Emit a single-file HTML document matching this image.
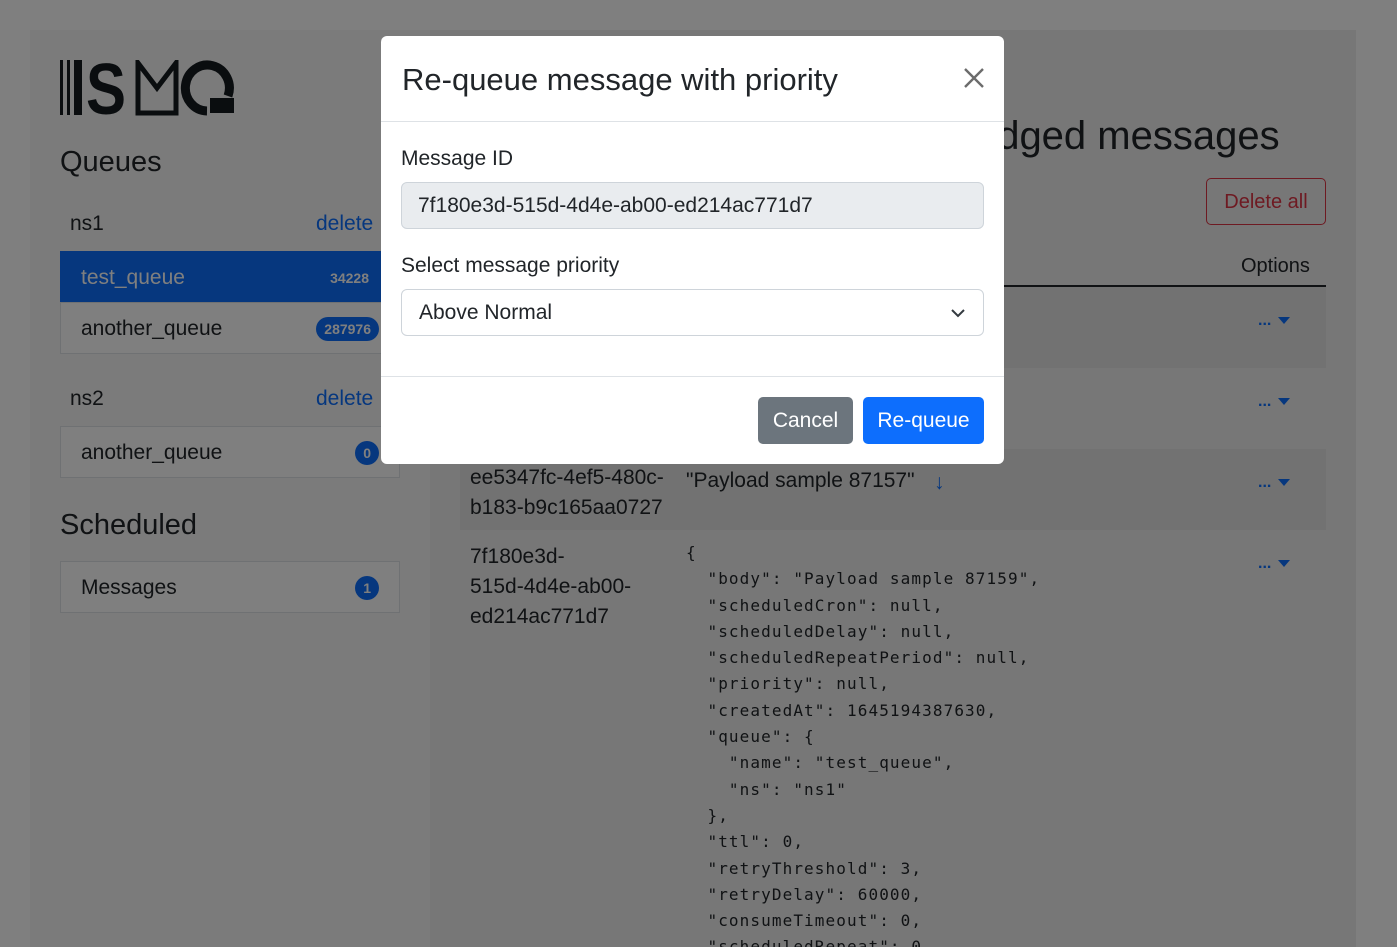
<!DOCTYPE html>
<html><head><meta charset="utf-8"><style>
*{box-sizing:border-box;margin:0;padding:0}
html{overflow:hidden;width:1397px;height:947px}
body{width:1397px;height:947px;overflow:hidden;background:#fff;font-family:"Liberation Sans","DejaVu Sans",sans-serif;color:#212529;position:relative}
.a{position:absolute;white-space:nowrap}
.side{position:absolute;left:30px;top:30px;width:400px;height:917px;background:#f6f6f6}
.main{position:absolute;left:430px;top:30px;width:926px;height:917px;background:#eeeeee}
.item{position:absolute;left:60px;width:340px;height:52px;border:1px solid #dee2e6;background:#fff;font-size:21px}
.item span.t{position:absolute;left:20px;top:14px}
.badge{position:absolute;right:20px;top:14px;background:#0d6efd;color:#fff;font-size:14px;font-weight:bold;border-radius:12px;padding:4px 8px}
.blue{color:#0d6efd}
.row{position:absolute;left:460px;width:866px;height:81px}
.dots{position:absolute;left:1258px;color:#0d6efd;font-size:16px;font-weight:bold}
.tri{position:absolute;left:1278px;width:0;height:0;border-left:6px solid transparent;border-right:6px solid transparent;border-top:7px solid #0d6efd}
.clip{position:absolute;left:686px;top:540px;width:500px;height:407px;overflow:hidden}
pre{font-family:"DejaVu Sans Mono","Liberation Mono",monospace;font-size:16px;letter-spacing:1.1px;line-height:26.3px;color:#212529;white-space:pre}
.overlay{position:absolute;left:0;top:0;width:1397px;height:947px;background:rgba(0,0,0,.5)}
.modal{position:absolute;left:381px;top:36px;width:623px;height:428px;background:#fff;border-radius:6px}
</style></head><body>
<div class="side"></div>
<div class="main"></div>
<svg class="a" style="left:60px;top:60px" width="176" height="56" viewBox="0 0 176 56">
<rect x="0" y="0" width="3" height="55" fill="#141a1f"/><rect x="7" y="0" width="3" height="55" fill="#141a1f"/><rect x="14" y="0" width="8" height="55" fill="#141a1f"/>
<text x="26" y="54" font-family="Liberation Sans" font-weight="bold" font-size="72" fill="#141a1f" textLength="40" lengthAdjust="spacingAndGlyphs">S</text>
<path d="M78 53 V3 L97 28 L116 3 V53 Z" fill="none" stroke="#141a1f" stroke-width="5"/>
<path d="M147 51 A22 23 0 1 1 168 36" fill="none" stroke="#141a1f" stroke-width="9"/>
<rect x="150" y="38" width="24" height="15" fill="#141a1f"/>
</svg>
<div class="a" style="left:60px;top:146px;font-size:29px">Queues</div>
<div class="a" style="left:70px;top:212px;font-size:21px">ns1</div>
<div class="a blue" style="left:316px;top:212px;font-size:21px">delete</div>
<div class="item" style="top:251px;background:#0d6efd;border-color:#0d6efd;color:#fff"><span class="t">test_queue</span><span class="badge" style="background:none;padding-right:0;right:30px">34228</span></div>
<div class="item" style="top:302px"><span class="t">another_queue</span><span class="badge">287976</span></div>
<div class="a" style="left:70px;top:387px;font-size:21px">ns2</div>
<div class="a blue" style="left:316px;top:387px;font-size:21px">delete</div>
<div class="item" style="top:426px"><span class="t">another_queue</span><span class="badge">0</span></div>
<div class="a" style="left:60px;top:509px;font-size:29px">Scheduled</div>
<div class="item" style="top:561px"><span class="t">Messages</span><span class="badge">1</span></div>

<div class="a" style="left:826px;top:114px;font-size:40px">Acknowledged messages</div>
<div class="a" style="left:1206px;top:178px;width:120px;height:47px;border:1px solid #dc3545;border-radius:5px;color:#dc3545;font-size:20px;text-align:center;line-height:47px">Delete all</div>
<div class="a" style="left:1241px;top:255px;font-size:20px">Options</div>
<div class="a" style="left:460px;top:285px;width:866px;height:2px;background:#212529"></div>
<div class="row" style="top:287px;background:#e4e4e4"></div>
<div class="row" style="top:449px;background:#e4e4e4"></div>
<div class="dots" style="top:312px">...</div><div class="tri" style="top:317px"></div>
<div class="dots" style="top:393px">...</div><div class="tri" style="top:398px"></div>
<div class="dots" style="top:474px">...</div><div class="tri" style="top:479px"></div>
<div class="dots" style="top:555px">...</div><div class="tri" style="top:560px"></div>
<div class="a" style="left:470px;top:463px;font-size:21px;line-height:30px">ee5347fc-4ef5-480c-<br>b183-b9c165aa0727</div>
<div class="a" style="left:686px;top:469px;font-size:21px">"Payload sample 87157"</div>
<div class="a blue" style="left:934px;top:471px;font-size:21px">↓</div>
<div class="a" style="left:470px;top:542px;font-size:21px;line-height:30px">7f180e3d-<br>515d-4d4e-ab00-<br>ed214ac771d7</div>
<div class="clip"><pre>{
  "body": "Payload sample 87159",
  "scheduledCron": null,
  "scheduledDelay": null,
  "scheduledRepeatPeriod": null,
  "priority": null,
  "createdAt": 1645194387630,
  "queue": {
    "name": "test_queue",
    "ns": "ns1"
  },
  "ttl": 0,
  "retryThreshold": 3,
  "retryDelay": 60000,
  "consumeTimeout": 0,
  "scheduledRepeat": 0</pre></div>

<div class="overlay"></div>
<div class="modal">
  <div class="a" style="left:21px;top:26px;font-size:31px">Re-queue message with priority</div>
  <svg class="a" style="left:582px;top:31px" width="22" height="22" viewBox="0 0 22 22"><path d="M2 2L20 20M20 2L2 20" stroke="#6c6c6c" stroke-width="2.4"/></svg>
  <div class="a" style="left:0;top:85px;width:623px;height:1px;background:#dee2e6"></div>
  <div class="a" style="left:20px;top:111px;font-size:21px">Message ID</div>
  <div class="a" style="left:20px;top:146px;width:583px;height:47px;background:#e9ecef;border:1px solid #ced4da;border-radius:6px;font-size:21px;padding:11px 16px">7f180e3d-515d-4d4e-ab00-ed214ac771d7</div>
  <div class="a" style="left:20px;top:218px;font-size:21px">Select message priority</div>
  <div class="a" style="left:20px;top:253px;width:583px;height:47px;background:#fff;border:1px solid #ced4da;border-radius:6px;font-size:21px;padding:11px 17px">Above Normal</div>
  <svg class="a" style="left:569px;top:271px" width="16" height="12" viewBox="0 0 16 12"><path d="M2 3L8 9L14 3" fill="none" stroke="#343a40" stroke-width="2"/></svg>
  <div class="a" style="left:0;top:340px;width:623px;height:1px;background:#dee2e6"></div>
  <div class="a" style="left:377px;top:361px;width:95px;height:47px;background:#6c757d;border-radius:5px;color:#fff;font-size:21px;text-align:center;line-height:48px">Cancel</div>
  <div class="a" style="left:482px;top:361px;width:121px;height:47px;background:#0d6efd;border-radius:5px;color:#fff;font-size:21px;text-align:center;line-height:48px">Re-queue</div>
</div>
</body></html>
